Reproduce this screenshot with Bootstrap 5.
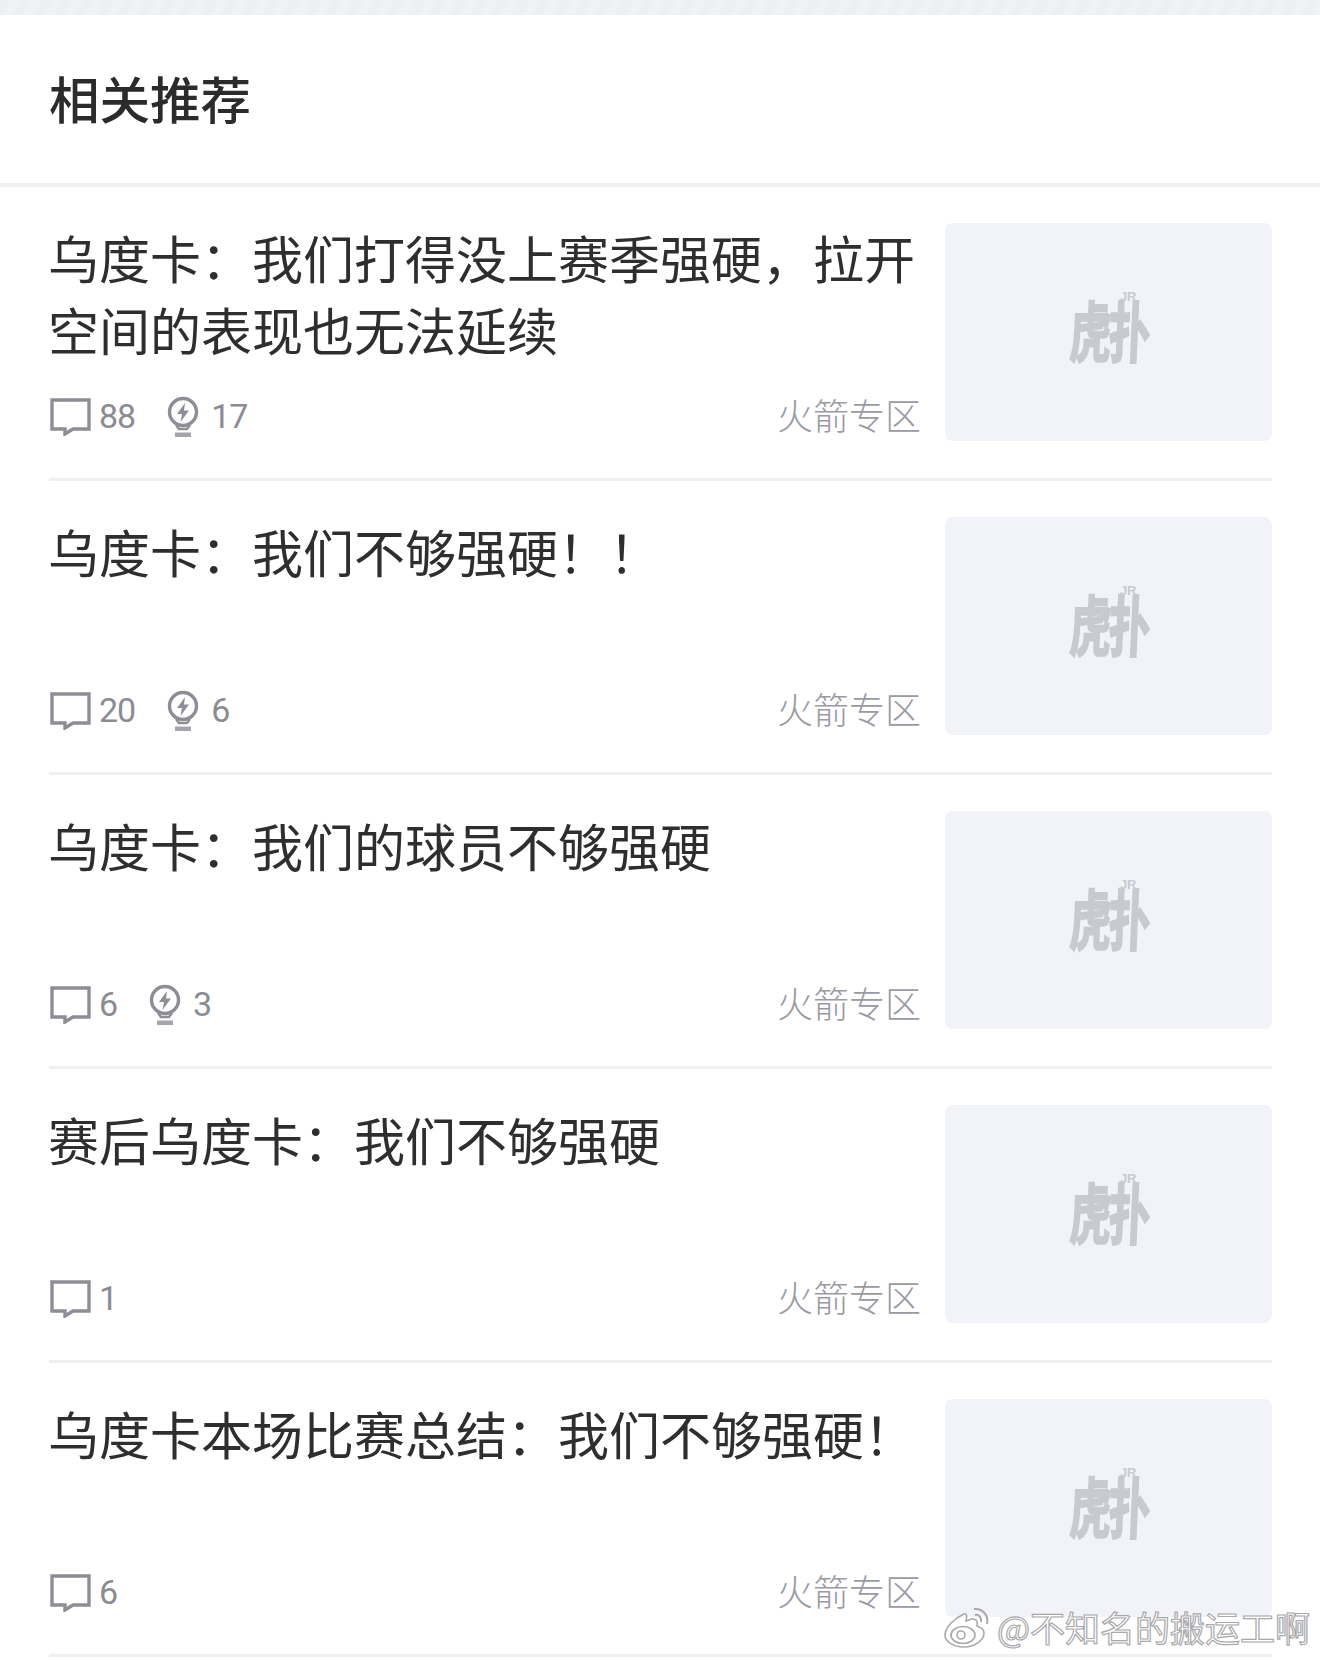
<!DOCTYPE html>
<html lang="zh-CN">
<head>
<meta charset="utf-8">
<title>相关推荐</title>
<link href="https://cdn.jsdelivr.net/npm/bootstrap@5.3.0/dist/css/bootstrap.min.css" rel="stylesheet">
<style>
html,body{margin:0;background:#fff;}
body{width:1320px;height:1660px;overflow:hidden;position:relative;font-family:"Noto Sans CJK SC","Noto Sans CJK JP",sans-serif;color:#333;}
.top-band{height:15px;background:repeating-linear-gradient(120deg,#eeeff1 0 9px,#f1f2f4 9px 18px);}
.head-bar{height:172px;padding:0 0 4px 49px;border-bottom:4px solid #f1f1f3;}
.head-title{font-size:50.5px;line-height:1;font-weight:500;color:#2b2b2d;margin:0;}
.feed{padding:0 48px 0 49px;}
.feed-row{height:294px;padding:36px 0 37px;border-bottom:3px solid #f0f0f2;gap:25px;}
.feed-text{width:871px;flex:none;}
.feed-title{font-size:51px;line-height:72px;color:#2e2e30;font-weight:400;margin:-2px 0 0 -1px;}
.meta-row{height:40px;color:#8e8f96;font-size:34px;line-height:40px;margin-bottom:5px;padding-left:1px;}
.meta-row svg{margin-top:2px;}
.meta-row svg.bulb-ico{margin-right:3px;}
.meta-num{font-family:Roboto,"Liberation Sans",sans-serif;font-weight:400;margin-left:8px;margin-right:31px;color:#8b8c93;letter-spacing:-1px;}
.meta-zone{font-size:36px;line-height:40px;color:#9a9ba2;font-weight:300;margin-top:-5px;margin-right:-1px;}
.thumb-box{width:327px;height:218px;flex:none;background:#f2f3f8;border-radius:8px;padding-bottom:8px;}
.hupu-mark{position:relative;width:90px;height:72px;color:#c9cad0;}
.hupu-word{display:block;font-weight:700;font-size:44px;line-height:72px;white-space:nowrap;transform:scale(.95,1.5) skewX(-4deg);transform-origin:center;text-align:center;letter-spacing:-3px;-webkit-text-stroke:1.4px #c9cad0;}
.hupu-jr{position:absolute;top:-2px;right:17px;font:700 13px/1 "Liberation Sans",sans-serif;}
.stamp{position:absolute;right:10px;top:1606px;gap:4px;}
.stamp-text{font-size:35px;line-height:42px;color:#fff;-webkit-text-stroke:1.2px #a9a9ac;font-weight:400;white-space:nowrap;}
</style>
</head>
<body>
<div class="top-band"></div>
<div class="head-bar d-flex align-items-center"><h1 class="head-title">相关推荐</h1></div>
<div class="feed">

<div class="feed-row d-flex">
  <div class="feed-text d-flex flex-column justify-content-between">
    <h2 class="feed-title">乌度卡&#xFF1A;我们打得没上赛季强硬&#xFF0C;拉开空间的表现也无法延续</h2>
    <div class="meta-row d-flex align-items-center">
      <svg width="41" height="38" viewBox="0 0 41 38" fill="none" stroke="#8d8e95" stroke-width="3.4" aria-hidden="true"><path d="M2 2H39V31H23L15 36V31H2Z"/></svg><span class="meta-num">88</span>
      <svg class="bulb-ico" width="34" height="42" viewBox="0 0 34 42" aria-hidden="true"><circle cx="17" cy="16" r="13.5" fill="none" stroke="#8d8e95" stroke-width="3.4"/><path d="M10 29l3 4H21l3-4" fill="none" stroke="#8d8e95" stroke-width="2.4"/><path d="M9 36.500H25V41H9Z" fill="#a5a6ac"/><path d="M19 7L11 18H16L14.500 26L23 14.500H18Z" fill="#8d8e95"/></svg><span class="meta-num">17</span>
      <span class="meta-zone ms-auto">火箭专区</span>
    </div>
  </div>
  <div class="thumb-box d-flex align-items-center justify-content-center"><div class="hupu-mark"><span class="hupu-word">虎扑</span><span class="hupu-jr">JR</span></div></div>
</div>

<div class="feed-row d-flex">
  <div class="feed-text d-flex flex-column justify-content-between">
    <h2 class="feed-title">乌度卡&#xFF1A;我们不够强硬&#xFF01;&#xFF01;</h2>
    <div class="meta-row d-flex align-items-center">
      <svg width="41" height="38" viewBox="0 0 41 38" fill="none" stroke="#8d8e95" stroke-width="3.4" aria-hidden="true"><path d="M2 2H39V31H23L15 36V31H2Z"/></svg><span class="meta-num">20</span>
      <svg class="bulb-ico" width="34" height="42" viewBox="0 0 34 42" aria-hidden="true"><circle cx="17" cy="16" r="13.5" fill="none" stroke="#8d8e95" stroke-width="3.4"/><path d="M10 29l3 4H21l3-4" fill="none" stroke="#8d8e95" stroke-width="2.4"/><path d="M9 36.500H25V41H9Z" fill="#a5a6ac"/><path d="M19 7L11 18H16L14.500 26L23 14.500H18Z" fill="#8d8e95"/></svg><span class="meta-num">6</span>
      <span class="meta-zone ms-auto">火箭专区</span>
    </div>
  </div>
  <div class="thumb-box d-flex align-items-center justify-content-center"><div class="hupu-mark"><span class="hupu-word">虎扑</span><span class="hupu-jr">JR</span></div></div>
</div>

<div class="feed-row d-flex">
  <div class="feed-text d-flex flex-column justify-content-between">
    <h2 class="feed-title">乌度卡&#xFF1A;我们的球员不够强硬</h2>
    <div class="meta-row d-flex align-items-center">
      <svg width="41" height="38" viewBox="0 0 41 38" fill="none" stroke="#8d8e95" stroke-width="3.4" aria-hidden="true"><path d="M2 2H39V31H23L15 36V31H2Z"/></svg><span class="meta-num">6</span>
      <svg class="bulb-ico" width="34" height="42" viewBox="0 0 34 42" aria-hidden="true"><circle cx="17" cy="16" r="13.5" fill="none" stroke="#8d8e95" stroke-width="3.4"/><path d="M10 29l3 4H21l3-4" fill="none" stroke="#8d8e95" stroke-width="2.4"/><path d="M9 36.500H25V41H9Z" fill="#a5a6ac"/><path d="M19 7L11 18H16L14.500 26L23 14.500H18Z" fill="#8d8e95"/></svg><span class="meta-num">3</span>
      <span class="meta-zone ms-auto">火箭专区</span>
    </div>
  </div>
  <div class="thumb-box d-flex align-items-center justify-content-center"><div class="hupu-mark"><span class="hupu-word">虎扑</span><span class="hupu-jr">JR</span></div></div>
</div>

<div class="feed-row d-flex">
  <div class="feed-text d-flex flex-column justify-content-between">
    <h2 class="feed-title">赛后乌度卡&#xFF1A;我们不够强硬</h2>
    <div class="meta-row d-flex align-items-center">
      <svg width="41" height="38" viewBox="0 0 41 38" fill="none" stroke="#8d8e95" stroke-width="3.4" aria-hidden="true"><path d="M2 2H39V31H23L15 36V31H2Z"/></svg><span class="meta-num">1</span>
      <span class="meta-zone ms-auto">火箭专区</span>
    </div>
  </div>
  <div class="thumb-box d-flex align-items-center justify-content-center"><div class="hupu-mark"><span class="hupu-word">虎扑</span><span class="hupu-jr">JR</span></div></div>
</div>

<div class="feed-row d-flex">
  <div class="feed-text d-flex flex-column justify-content-between">
    <h2 class="feed-title">乌度卡本场比赛总结&#xFF1A;我们不够强硬&#xFF01;</h2>
    <div class="meta-row d-flex align-items-center">
      <svg width="41" height="38" viewBox="0 0 41 38" fill="none" stroke="#8d8e95" stroke-width="3.4" aria-hidden="true"><path d="M2 2H39V31H23L15 36V31H2Z"/></svg><span class="meta-num">6</span>
      <span class="meta-zone ms-auto">火箭专区</span>
    </div>
  </div>
  <div class="thumb-box d-flex align-items-center justify-content-center"><div class="hupu-mark"><span class="hupu-word">虎扑</span><span class="hupu-jr">JR</span></div></div>
</div>

</div>
<div class="stamp d-flex align-items-center">
  <svg width="50" height="42" viewBox="0 0 50 42" fill="#fff" stroke="#a9a9ac" stroke-width="1.6" aria-hidden="true"><path d="M21 8C12 12 2 21 2 29C2 36 11 41 21 41C32 41 41 34 41 27C41 22 36 21 34 20C35 16 34 13 30 13C27 13 24 15 23 15C24 11 24 7 21 8Z"/><ellipse cx="20" cy="29" rx="12" ry="8.500"/><circle cx="18" cy="29" r="4"/><path d="M31 3C39 2 46 9 44 18M32 9C36 8 39 12 38 16" fill="none" stroke-width="2"/></svg>
  <span class="stamp-text">@不知名的搬运工啊</span>
</div>
</body>
</html>
